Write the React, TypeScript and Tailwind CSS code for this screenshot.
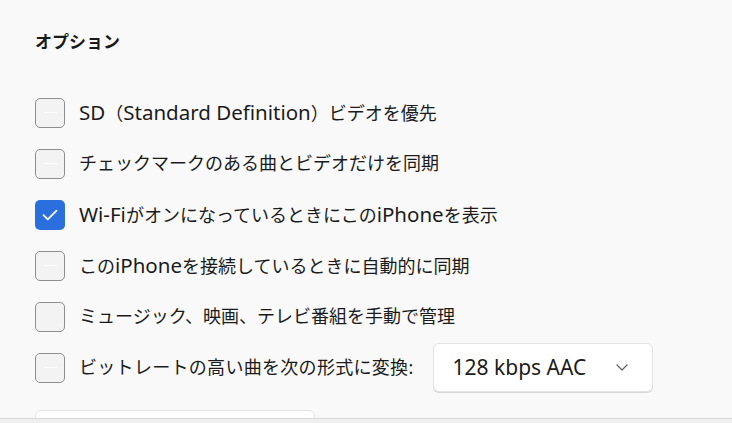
const FONT = "font-['Noto_Sans','Noto_Sans_CJK_JP',sans-serif]";

type Option = {
  label: string;
  checked?: boolean;
  dash?: boolean;
};

const options: Option[] = [
  { label: "SD（Standard Definition）ビデオを優先", dash: true },
  { label: "チェックマークのある曲とビデオだけを同期", dash: true },
  { label: "Wi-FiがオンになっているときにこのiPhoneを表示", checked: true },
  { label: "このiPhoneを接続しているときに自動的に同期", dash: true },
  { label: "ミュージック、映画、テレビ番組を手動で管理" },
];

// Latin runs render larger than the Japanese ones in the original UI font
function MixedText({ text }: { text: string }) {
  const parts = text.match(/[A-Za-z0-9 \-]+|[^A-Za-z0-9 \-]+/g) ?? [];
  return (
    <span>
      {parts.map((part, index) =>
        /[A-Za-z]/.test(part) ? (
          <span key={index} className="text-[20.5px]">{part}</span>
        ) : (
          <span key={index}>{part}</span>
        ),
      )}
    </span>
  );
}

function Checkbox({ checked, dash }: { checked?: boolean; dash?: boolean }) {
  if (checked) {
    return (
      <span className="flex h-[30px] w-[30px] shrink-0 items-center justify-center rounded-[5px] bg-[#2b6ede]">
        <svg width="16" height="12" viewBox="0 0 16 12" fill="none">
          <path d="M1.5 6.2 L5.8 10.3 L14.5 1.6" stroke="white" strokeWidth="1.8" strokeLinecap="round" strokeLinejoin="round" />
        </svg>
      </span>
    );
  }

  return (
    <span className="flex h-[30px] w-[30px] shrink-0 items-center justify-center rounded-[5px] border-[1.5px] border-[#8e8e8e] bg-[#f3f3f3]">
      {dash ? <span className="h-px w-[13px] bg-[#fdfdfd]" /> : null}
    </span>
  );
}

export default function App() {
  return (
    <div className={`flex h-[423px] w-[732px] flex-col overflow-hidden bg-[#f9f9f9] text-[#1b1b1b] ${FONT}`}>
      <div className="flex-1 overflow-hidden pl-[35px] pt-[30px]">
        <h2 className="h-6 text-[17px] font-bold leading-6 text-[#1a1a1a]">オプション</h2>

        <div className="mt-[33px] flex flex-col">
          {options.map((option) => (
            <label key={option.label} className="flex h-[51px] items-center gap-[14px] text-[18px]">
              <Checkbox checked={option.checked} dash={option.dash} />
              <MixedText text={option.label} />
            </label>
          ))}
          <div className="flex h-[51px] items-center text-[18px]">
            <label className="flex items-center gap-[14px]">
              <Checkbox dash />
              <span className="tracking-[0.3px]">ビットレートの高い曲を次の形式に変換:</span>
            </label>
            <button
              type="button"
              className="ml-[19px] flex h-[49px] w-[220px] items-center justify-between rounded-[6px] border border-[#e3e3e3] bg-white pl-[19px] pr-[24px] text-[21px] shadow-[0_1px_0_#d6d6d6]"
            >
              <span>128 kbps AAC</span>
              <svg width="12" height="7" viewBox="0 0 12 7" fill="none">
                <path d="M1 1 L6 6 L11 1" stroke="#616161" strokeWidth="1.2" strokeLinecap="round" strokeLinejoin="round" />
              </svg>
            </button>
          </div>
        </div>

        <div className="mt-[17px] h-10 w-[280px] rounded-[6px] border border-[#e3e3e3] bg-white" />
      </div>
      <div className="h-[5px] border-t border-[#d8d8d8] bg-[#efefef]" />
    </div>
  );
}
